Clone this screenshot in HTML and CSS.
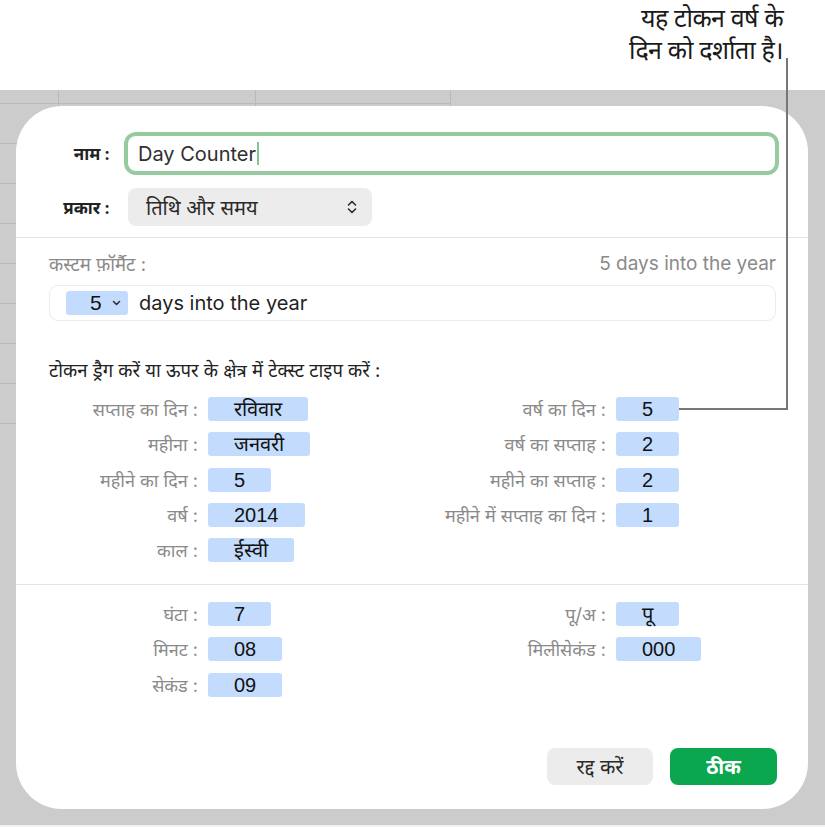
FILE: index.html
```html
<!DOCTYPE html>
<html lang="hi">

<head>
    <meta charset="UTF-8">
    <meta name="viewport" content="width=device-width, initial-scale=1.0">
    <title>कस्टम फ़ॉर्मैट</title>
    <link rel="stylesheet" href="styles.css">
</head>

<body>
    <div class="page">
        <div class="callout">
            <p>यह टोकन वर्ष के<br>दिन को दर्शाता है।</p>
        </div>

        <div class="sheet">
            <div class="dialog">
                <div class="top-fields">
                    <div class="field-row">
                        <label class="field-label">नाम :</label>
                        <div class="name-input">Day Counter<span class="caret"></span></div>
                    </div>
                    <div class="field-row type-row">
                        <label class="field-label">प्रकार :</label>
                        <div class="popup">
                            <span>तिथि और समय</span>
                            <svg class="popup-arrows" width="10" height="16" viewBox="0 0 10 16">
                                <path d="M1.5 6 L5 2.5 L8.5 6 M1.5 10 L5 13.5 L8.5 10" fill="none" stroke="#2b2b2b"
                                    stroke-width="1.6" stroke-linecap="round" stroke-linejoin="round" />
                            </svg>
                        </div>
                    </div>
                </div>

                <div class="format-section">
                    <div class="format-head">
                        <span>कस्टम फ़ॉर्मैट :</span>
                        <span class="preview">5 days into the year</span>
                    </div>
                    <div class="format-field">
                        <span class="format-token">5
                            <svg width="9" height="6" viewBox="0 0 9 6">
                                <path d="M1.5 1.5 L4.5 4.5 L7.5 1.5" fill="none" stroke="#333" stroke-width="1.6"
                                    stroke-linecap="round" stroke-linejoin="round" />
                            </svg>
                        </span>
                        <span class="format-text">days into the year</span>
                    </div>
                    <p class="hint">टोकन ड्रैग करें या ऊपर के क्षेत्र में टेक्स्ट टाइप करें :</p>
                </div>

                <div class="token-grid date-grid">
                    <span class="tk-label">सप्ताह का दिन :</span>
                    <span class="token">रविवार</span>
                    <span class="tk-label">वर्ष का दिन :</span>
                    <span class="token">5</span>

                    <span class="tk-label">महीना :</span>
                    <span class="token">जनवरी</span>
                    <span class="tk-label">वर्ष का सप्ताह :</span>
                    <span class="token">2</span>

                    <span class="tk-label">महीने का दिन :</span>
                    <span class="token">5</span>
                    <span class="tk-label">महीने का सप्ताह :</span>
                    <span class="token">2</span>

                    <span class="tk-label">वर्ष :</span>
                    <span class="token">2014</span>
                    <span class="tk-label">महीने में सप्ताह का दिन :</span>
                    <span class="token">1</span>

                    <span class="tk-label">काल :</span>
                    <span class="token">ईस्वी</span>
                </div>

                <div class="token-grid time-grid">
                    <span class="tk-label">घंटा :</span>
                    <span class="token">7</span>
                    <span class="tk-label">पू/अ :</span>
                    <span class="token">पू</span>

                    <span class="tk-label">मिनट :</span>
                    <span class="token">08</span>
                    <span class="tk-label">मिलीसेकंड :</span>
                    <span class="token">000</span>

                    <span class="tk-label">सेकंड :</span>
                    <span class="token">09</span>
                </div>

                <div class="actions">
                    <button class="btn btn-cancel">रद्द करें</button>
                    <button class="btn btn-ok">ठीक</button>
                </div>
            </div>
        </div>

        <!-- leader line from the callout to the "day of year" token -->
        <svg class="leader" width="825" height="827" viewBox="0 0 825 827">
            <polyline points="787,58 787,409 679,409" fill="none" stroke="#777" stroke-width="2" />
        </svg>
    </div>
</body>

</html>
```

FILE: styles.css
```css
* {
    margin: 0;
    padding: 0;
    box-sizing: border-box;
}

body {
    font-family: Inter, "Noto Sans", sans-serif;
    background-color: #ffffff;
    color: #1c1c1c;
    width: 825px;
    height: 827px;
    overflow: hidden;
}

.page {
    position: relative;
    width: 825px;
    height: 827px;
    background: #f2f2f2;
}

.callout {
    height: 90px;
    background: #ffffff;
    display: flex;
    justify-content: flex-end;
    padding: 2px 42px 0 0;
}

.callout p {
    font-size: 25px;
    line-height: 32px;
    text-align: right;
    color: #1a1a1a;
    letter-spacing: -0.6px;
}

.sheet {
    height: 735px;
    padding: 16px 17px 16px 16px;
    background-color: #cccccc;
    background-image:
        linear-gradient(to right, transparent 58px, #b9b9b9 58px 59px, transparent 59px 255px, #b9b9b9 255px 256px, transparent 256px 450px, #b9b9b9 450px 451px, transparent 451px),
        repeating-linear-gradient(to bottom, transparent 0 13px, #bababa 13px 14px, transparent 14px 40px);
    background-size: 452px 16px, 451px 336px;
    background-repeat: no-repeat;
}

.dialog {
    height: 703px;
    background: #ffffff;
    border-radius: 46px;
    display: flex;
    flex-direction: column;
}

/* name + type */
.top-fields {
    padding: 30px 33px 11px 0;
    border-bottom: 1px solid #e4e4e4;
}

.field-row {
    display: grid;
    grid-template-columns: 94px 1fr;
    column-gap: 18px;
    align-items: center;
}

.field-label {
    text-align: right;
    font-size: 17px;
    font-weight: 700;
    color: #222;
}

.name-input {
    height: 35px;
    border-radius: 8px;
    box-shadow: 0 0 0 4px #96cb9f;
    padding-left: 10px;
    display: flex;
    align-items: center;
    font-size: 20px;
    color: #2f2f2f;
}

.caret {
    display: inline-block;
    width: 2px;
    height: 23px;
    margin-left: 1px;
    background: #86c592;
}

.type-row {
    margin-top: 17px;
}

.popup {
    width: 244px;
    height: 38px;
    background: #ececec;
    border-radius: 8px;
    display: flex;
    align-items: center;
    justify-content: space-between;
    padding: 0 15px 0 18px;
    font-size: 20px;
    color: #2a2a2a;
}

/* custom format */
.format-section {
    padding: 14px 32px 0 33px;
}

.format-head {
    display: flex;
    justify-content: space-between;
    align-items: center;
    height: 22px;
    font-size: 18.5px;
    color: #8a8a8a;
}

.format-head .preview {
    font-size: 19px;
}

.format-field {
    margin-top: 11px;
    height: 36px;
    border: 1px solid #ebebeb;
    border-radius: 9px;
    display: flex;
    align-items: center;
    padding-left: 16px;
}

.format-token {
    width: 62px;
    height: 24px;
    background: #c3dcfd;
    border-radius: 3px;
    display: flex;
    align-items: center;
    gap: 10px;
    padding-left: 24px;
    font-family: "Liberation Sans", sans-serif;
    font-size: 21px;
    color: #111;
}

.format-text {
    margin-left: 11px;
    font-size: 20px;
    color: #1f1f1f;
}

.hint {
    margin-top: 38px;
    line-height: 22px;
    font-size: 18.5px;
    color: #222;
}

/* token grids */
.token-grid {
    display: grid;
    grid-template-columns: 182px 200px 188px 1fr;
    grid-auto-rows: 24px;
    column-gap: 10px;
    row-gap: 11.3px;
    align-items: center;
}

.date-grid {
    padding: 16px 0 22px;
    border-bottom: 1px solid #e4e4e4;
}

.time-grid {
    padding-top: 17px;
}

.tk-label {
    text-align: right;
    font-size: 18px;
    color: #8a8a8a;
    white-space: nowrap;
}

.token {
    justify-self: start;
    height: 24px;
    padding: 0 26px;
    min-width: 59px;
    background: #c3dcfd;
    border-radius: 3px;
    text-align: center;
    font-family: "Liberation Sans", sans-serif;
    font-size: 20px;
    line-height: 24px;
    color: #111;
}

/* buttons */
.actions {
    margin-top: auto;
    display: flex;
    justify-content: flex-end;
    align-items: center;
    gap: 17px;
    padding: 0 31px 24px 0;
}

.btn {
    height: 37px;
    border: none;
    border-radius: 8px;
    font-family: Inter, "Noto Sans", sans-serif;
    font-size: 20px;
    cursor: pointer;
}

.btn-cancel {
    width: 106px;
    background: #ececec;
    color: #2a2a2a;
}

.btn-ok {
    width: 107px;
    background: #0ba74f;
    color: #ffffff;
    font-weight: 700;
}

.leader {
    position: absolute;
    top: 0;
    left: 0;
    pointer-events: none;
}
```
